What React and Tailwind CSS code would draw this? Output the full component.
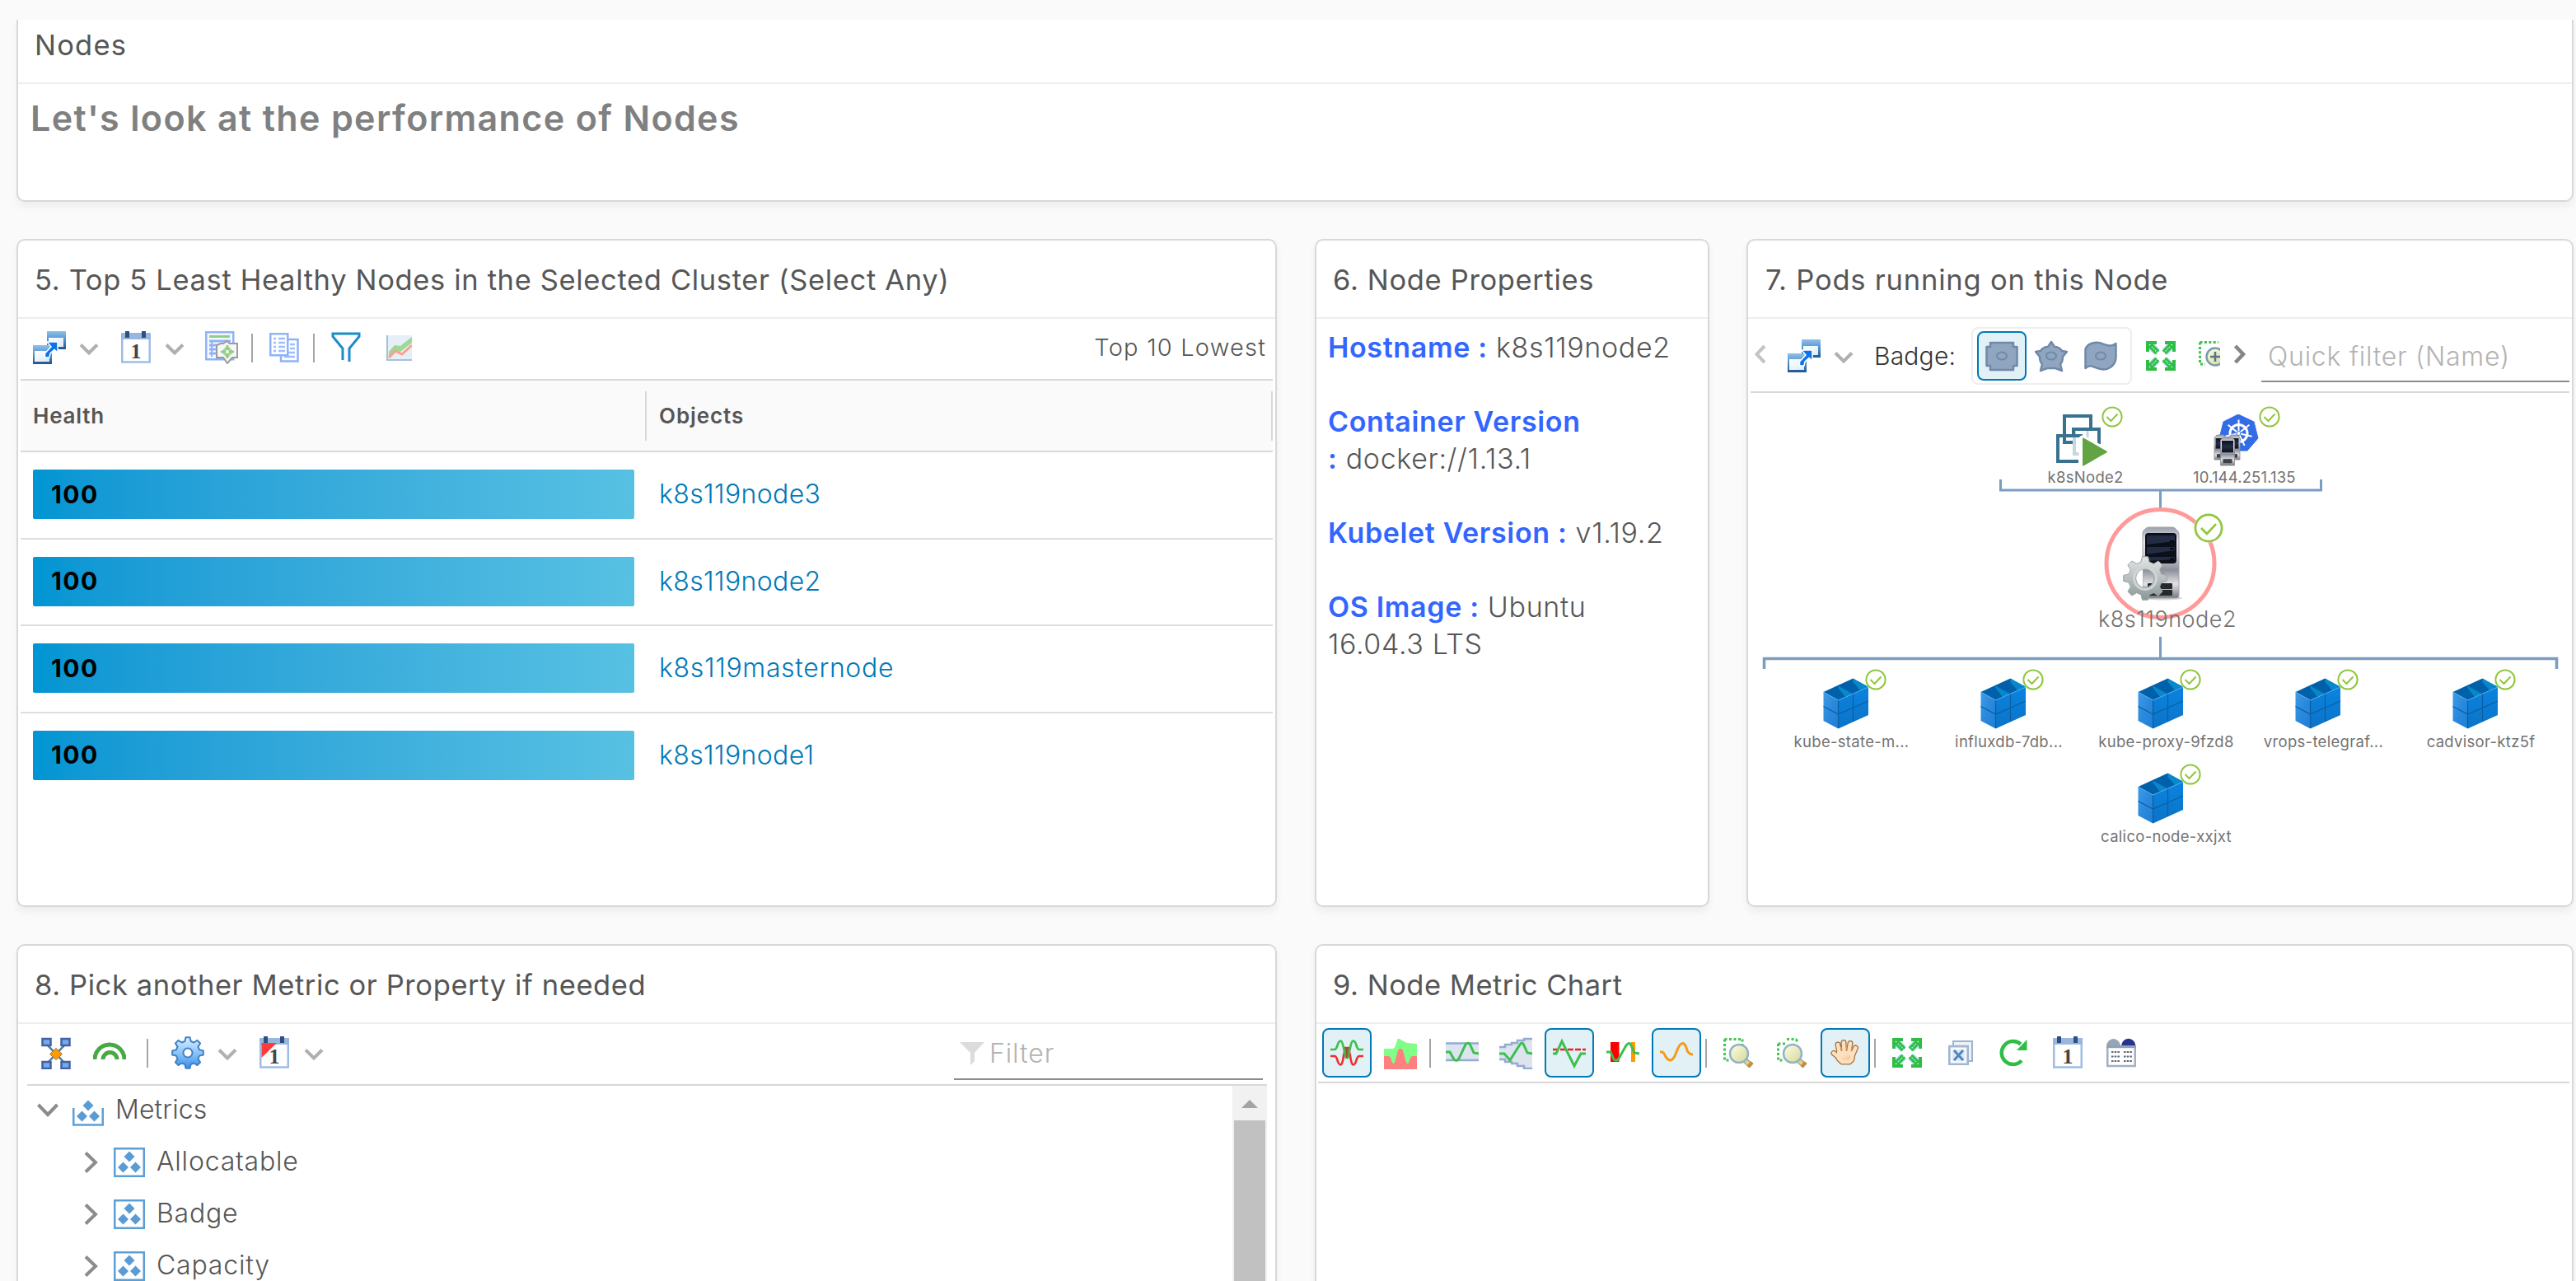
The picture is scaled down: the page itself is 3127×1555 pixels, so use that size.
const gearPath = (cx, cy, ro, ri, n) => {
  const pts = [];
  const step = (Math.PI * 2) / n;
  for (let i = 0; i < n; i++) {
    const a = i * step - Math.PI / 2;
    [[-0.32, ri], [-0.17, ro], [0.17, ro], [0.32, ri]].forEach(([k, r]) => {
      pts.push(`${(cx + r * Math.cos(a + k * step)).toFixed(2)} ${(cy + r * Math.sin(a + k * step)).toFixed(2)}`);
    });
  }
  return `M${pts.join("L")}Z`;
};

const Gradient = ({ id, stops, x2 = 0, y2 = 1 }) => (
  <linearGradient id={id} x1="0" y1="0" x2={x2} y2={y2}>
    {stops.map((c, i) => (
      <stop key={i} offset={i / (stops.length - 1)} stopColor={c} />
    ))}
  </linearGradient>
);

const Gradients = () => (
  <svg className="absolute h-0 w-0" aria-hidden="true">
    <defs>
      <Gradient id="win" stops={["#8fc0ea", "#4f90cb", "#1d5790"]} />
      <Gradient id="pane" stops={["#ffffff", "#dbeafa"]} x2={1} />
      <Gradient id="gearBlue" stops={["#ddeeff", "#8cc4fa", "#3a8eea"]} />
      <Gradient id="gearGray" stops={["#e4e6e6", "#b9bfbf", "#8a9797"]} />
      <Gradient id="metal" stops={["#9a9fab", "#e6e6ea", "#d2d3d9", "#8c8f9a", "#e2e2e6", "#77797f"]} />
      <Gradient id="screen" stops={["#0c111c", "#232f47", "#0c111c"]} />
      <Gradient id="cubeL" stops={["#3f9be6", "#2a89dc", "#1f7fd6"]} x2={1} />
      <Gradient id="cubeR" stops={["#0a84e0", "#0b73c6"]} />
      <Gradient id="skin" stops={["#fff0dd", "#f8b67c"]} x2={1} />
      <Gradient id="lens" stops={["#ffffe4", "#d3d69a"]} x2={1} />
    </defs>
  </svg>
);

const Svg = ({ w = 40, h = 40, className = "", children }) => (
  <svg width={w} height={h} viewBox={`0 0 ${w} ${h}`} fill="none" className={`shrink-0 ${className}`}>
    {children}
  </svg>
);

const LinkIcon = ({ className }) => (
  <Svg className={className}>
    <rect x="17" y="0" width="23" height="22" fill="url(#win)" />
    <rect x="19" y="8" width="18" height="11" fill="url(#pane)" />
    <rect x="0" y="17" width="23" height="23" fill="url(#win)" />
    <rect x="2" y="24" width="18" height="13" fill="url(#pane)" />
    <path d="M17 13H30V26L26 22.500L21 27L20 32H14.500V27L22 19Z" fill="#0b74ea" stroke="#fff" strokeWidth="1.500" />
  </Svg>
);

const ChevronDown = ({ className }) => (
  <Svg w={24} h={16} className={className}>
    <path d="M2 2.500L12 12.500L22 2.500" stroke="#b0b0b0" strokeWidth="4" />
  </Svg>
);

const CalendarIcon = ({ className, flag }) => (
  <Svg w={36} h={40} className={className}>
    <rect x="1.250" y="4" width="33.500" height="33.500" fill="#fff" stroke="#9dbde6" strokeWidth="2.500" />
    <rect x="0" y="2" width="36" height="8" fill="#9ab6dd" />
    <rect x="5" y="0" width="5" height="8" fill="#2c4f86" />
    <rect x="25" y="0" width="5" height="8" fill="#2c4f86" />
    <text x="18" y="33" textAnchor="middle" fill="#454545" className="font-['Liberation_Serif'] text-[26px] font-bold">1</text>
    {flag && <path d="M2.500 8H21L2.500 26Z" fill="#ff3b3b" />}
  </Svg>
);

const ReportIcon = ({ className }) => (
  <Svg className={className}>
    <rect x="1.250" y="1.250" width="33" height="33" fill="#f4f8ff" stroke="#8fb3fb" strokeWidth="2.500" />
    <rect x="5" y="5" width="25" height="3" fill="#8fcf86" />
    <path d="M5 12H31M5 17H14M5 22H14M5 27H14" stroke="#8fb3fb" strokeWidth="3" />
    <path d="M8 12V31" stroke="#8fb3fb" strokeWidth="2" />
    <path d="M19 15H22L26 12L30 15H39V32H33L27 39L22 32H14V17Z" fill="#f7f7f7" stroke="#9b9b9b" strokeWidth="2" />
    <path d="M27 17L34.500 25L27 33L19.500 25Z" fill="#a5d79a" />
    <path d="M27 17V33M19 25H35" stroke="#8ccb7e" strokeWidth="2.500" />
    <circle cx="27" cy="25" r="2" fill="#fff" />
  </Svg>
);

const CopyIcon = ({ className }) => (
  <Svg w={36} h={36} className={className}>
    <rect x="14" y="8" width="20.500" height="26.500" fill="#fff" stroke="#8fb3fb" strokeWidth="2.500" />
    <path d="M25 14H31M25 19H31M18 24H31M18 29H31" stroke="#9fbffc" strokeWidth="2.500" />
    <rect x="1.250" y="1.250" width="21" height="26" fill="#fff" stroke="#8fb3fb" strokeWidth="2.500" />
    <path d="M5 7H8M11 7H19M5 12H8M11 12H19M5 17H8M11 17H19M5 22H8M11 22H19" stroke="#9fbffc" strokeWidth="2.500" />
  </Svg>
);

const FunnelIcon = ({ className }) => (
  <Svg w={36} h={38} className={className}>
    <path d="M14 34V20L2 5.500V2H34V5.500L22 20V36" stroke="#1a8cc6" strokeWidth="3" />
  </Svg>
);

const ChartIcon = ({ className }) => (
  <Svg w={31} h={31} className={className}>
    <rect width="31" height="31" fill="#e6eef7" />
    <path d="M3 20L10 12L17 13L31 2V9L17 20L11 18L3 26Z" fill="#9dd896" />
    <path d="M3 27L11 19L19 23L31 12" stroke="#fba08a" strokeWidth="3" />
    <path d="M1 0V30H31" stroke="#a7c0da" strokeWidth="2" />
  </Svg>
);

const Separator = ({ className = "" }) => <div className={`h-[35px] w-0.5 shrink-0 bg-[#aaa5a2] ${className}`} />;

const ExpandIcon = ({ className }) => (
  <Svg w={36} h={36} className={className}>
    {["", "rotate(90 18 18)", "rotate(180 18 18)", "rotate(270 18 18)"].map((t, i) => (
      <g key={i} transform={t}>
        <path d="M5 5L13.500 13.500" stroke="#9fdcf2" strokeWidth="9" />
        <path d="M5 5L14 14" stroke="#2fbd45" strokeWidth="6.500" />
        <path d="M7 7L14 14" stroke="#c9f2d6" strokeWidth="1.500" strokeDasharray="1.500 1.500" />
        <path d="M2 13V2H13" stroke="#2fbd45" strokeWidth="4" />
      </g>
    ))}
  </Svg>
);

const DottedPlus = ({ className }) => (
  <Svg w={26} h={32} className={className}>
    <path d="M1.500 1.500H24M1.500 1.500V28H8" stroke="#3fc04f" strokeWidth="3" strokeDasharray="3 2.400" />
    <circle cx="20" cy="19" r="10.500" fill="url(#lens)" stroke="#7c9aad" strokeWidth="2.500" />
    <path d="M20 13V25M14 19H26" stroke="#54758c" strokeWidth="2.500" />
  </Svg>
);

const Magnifier = ({ className, split }) => (
  <Svg className={className}>
    {split ? (
      <path d="M12 3.500H24M1.500 9H12M1.500 9V29H9M24 3.500V9" stroke="#3fc84f" strokeWidth="3" strokeDasharray="3 2.500" />
    ) : (
      <path d="M1.500 3.500H23M1.500 3.500V29H9M23 3.500V12" stroke="#3fc84f" strokeWidth="3" strokeDasharray="3 2.500" />
    )}
    <path d="M25 28L34 36" stroke="#8fa9a5" strokeWidth="7" />
    <path d="M26 29L33 35.500" stroke="#e2d28a" strokeWidth="4" />
    <path d="M30 37L35 31.500" stroke="#cf8a2c" strokeWidth="4" />
    <circle cx="19" cy="21" r="11" fill="url(#lens)" stroke="#93b3c4" strokeWidth="2.500" />
  </Svg>
);

const HandIcon = () => (
  <Svg>
    <g strokeLinecap="round" strokeLinejoin="round">
      <g stroke="#a8713f" strokeWidth="7">
        <path d="M13 20L11 10M18.500 18L18 7.500M24.500 18L26 8.500M29 22L32.500 14M13 26L6 20.500" />
        <path d="M12 20H29L28 28L25 31H16L12 27Z" />
      </g>
      <g stroke="#fde0c0" strokeWidth="4.500">
        <path d="M13 20L11 10M18.500 18L18 7.500M24.500 18L26 8.500M29 22L32.500 14M13 26L6 20.500" />
        <path d="M12 20H29L28 28L25 31H16L12 27Z" fill="url(#skin)" />
      </g>
      <path d="M15 17V13M21.500 16V12M27 18L28 14" stroke="#d69a66" strokeWidth="1.200" />
    </g>
  </Svg>
);

const CloseWindows = ({ className }) => (
  <Svg w={30} h={30} className={className}>
    <rect x="6" y="1" width="23" height="24" fill="#edf2f9" stroke="#9fb3cd" strokeWidth="2" />
    <rect x="1.250" y="7" width="22.500" height="22" fill="#dfe9f5" stroke="#a3b6d0" strokeWidth="2.500" />
    <rect x="4" y="10" width="17" height="16" stroke="#fff" strokeWidth="1.500" />
    <path d="M7 12L18 24M18 12L7 24" stroke="#4f87ba" strokeWidth="3" />
  </Svg>
);

const RefreshIcon = ({ className }) => (
  <Svg w={35} h={36} className={className}>
    <path d="M27 27.500A14 14 0 1 1 26 7.500" stroke="#2fbd45" strokeWidth="4.500" />
    <path d="M33.500 2V15H21Z" fill="#2fbd45" />
  </Svg>
);

const TimetableIcon = ({ className }) => (
  <Svg w={36} h={36} className={className}>
    <path d="M0 10A8.500 9 0 0 1 17 10Z" fill="#98a5b5" />
    <path d="M18 10A8.500 9 0 0 1 35.500 10Z" fill="#27338c" />
    <rect x="1.250" y="11" width="33.500" height="23" fill="#fff" stroke="#a2b0c6" strokeWidth="2.500" />
    <path d="M0 10.500H36" stroke="#8fa1b8" strokeWidth="3" />
    <path d="M6 17H16M6 22.500H16M6 28H16M21 17H31M21 22.500H31M21 28H31" stroke="#5d6678" strokeWidth="2.200" strokeDasharray="2.500 1.200" />
  </Svg>
);

const Toggle = ({ className = "", children }) => (
  <div className={`flex h-[60px] w-[60px] shrink-0 items-center justify-center rounded-lg border-2 border-[#0079b8] bg-[#e1f1f6] ${className}`}>{children}</div>
);

const Panel = ({ title, titleClass = "tracking-[0.65px]", className = "", children }) => (
  <section className={`flex flex-col rounded-[10px] border-2 border-[#d8d8d8] bg-white shadow-[0_6px_10px_rgba(0,0,0,0.05)] ${className}`}>
    <h2 className={`h-[95px] shrink-0 border-b-2 border-[#eee] pl-5 text-[34.5px] leading-[95px] whitespace-nowrap text-[#565656] ${titleClass}`}>{title}</h2>
    {children}
  </section>
);

const NODES = ["k8s119node3", "k8s119node2", "k8s119masternode", "k8s119node1"];

const HealthPanel = () => (
  <Panel title="5. Top 5 Least Healthy Nodes in the Selected Cluster (Select Any)" className="w-[1530px]">
    <div className="mx-[3px] flex h-[75px] shrink-0 items-center border-b-2 border-[#d8d8d8] pb-[3px]">
      <LinkIcon className="ml-[15px]" />
      <ChevronDown className="mt-1 ml-4" />
      <CalendarIcon className="ml-[27px]" />
      <ChevronDown className="mt-1 ml-[17px]" />
      <ReportIcon className="ml-[25px]" />
      <Separator className="ml-4" />
      <CopyIcon className="ml-5" />
      <Separator className="ml-[17px]" />
      <FunnelIcon className="ml-[20px]" />
      <ChartIcon className="ml-[31px]" />
      <span className="mr-[8px] ml-auto text-[29px] font-[350] tracking-[1.2px]">Top 10 Lowest</span>
    </div>
    <div className="mx-[3px] flex h-[87px] shrink-0 items-center border-b-2 border-[#d8d8d8] bg-[#fafafa] text-[26px] font-semibold">
      <div className="flex h-[60px] w-[760px] items-center border-r-2 border-[#d8d8d8] pl-[15px] tracking-[0.8px]">Health</div>
      <div className="flex h-[60px] flex-1 items-center border-r-2 border-[#d8d8d8] pl-[15px] tracking-[0.9px]">Objects</div>
    </div>
    {NODES.map((n, i) => (
      <div key={n} className={`mx-[3px] flex h-[105.5px] shrink-0 items-center ${i < 3 ? "border-b-2 border-[#dedede]" : "pb-0.5"}`}>
        <div className="-mt-px ml-[15px] flex h-[60px] w-[730px] items-center rounded-[2px] bg-linear-to-r from-[#0095d3] to-[#57c1e3] pl-[22px] text-[30px] font-bold tracking-[1.4px] text-black">100</div>
        <span className={`-mt-px ml-[30px] text-[32px] font-[350] text-[#0079b8] ${n.length > 12 ? "tracking-[0.65px]" : "tracking-[0.35px]"}`}>{n}</span>
      </div>
    ))}
  </Panel>
);

const Prop = ({ name, children }) => (
  <p>
    <b className="font-semibold tracking-[0.65px] text-[#36f]">{name}</b> {children}
  </p>
);

const PropertiesPanel = () => (
  <Panel title="6. Node Properties" className="ml-[46px] w-[479px]">
    <div className="flex flex-col gap-[45px] pt-[12px] pl-[14px] text-[34px] leading-[45px] font-[350] tracking-[0.65px]">
      <Prop name="Hostname :">k8s119node2</Prop>
      <Prop name={<>Container Version<br />:</>}>docker://1.13.1</Prop>
      <Prop name="Kubelet Version :">v1.19.2</Prop>
      <Prop name="OS Image :">Ubuntu<br />16.04.3 LTS</Prop>
    </div>
  </Panel>
);

const Badge = ({ size }) => (
  <svg width={size} height={size} viewBox="0 0 26 26" fill="none">
    <circle cx="13" cy="13" r="12.800" fill="#fff" />
    <circle cx="13" cy="13" r="11.600" stroke="#91c63f" strokeWidth="2" />
    <path d="M6.500 13L11.500 18L19.500 9.500" stroke="#91c63f" strokeWidth="2" />
  </svg>
);

const VmGlyph = () => (
  <Svg w={64} h={64}>
    <rect x="10" y="2" width="32" height="32" fill="#fff" stroke="#38728f" strokeWidth="4" />
    <rect x="22" y="18" width="30" height="30" fill="#fff" stroke="#c5d7df" strokeWidth="4" />
    <path d="M21 24V18H52V36" stroke="#38728f" strokeWidth="4" />
    <path d="M38 20V34" stroke="#c5d7df" strokeWidth="3" />
    <path d="M27 57H2V26H32" stroke="#38728f" strokeWidth="4" />
    <path d="M32 30L62 46L32 62Z" stroke="#fff" strokeWidth="9" strokeLinejoin="round" fill="#fff" />
    <path d="M33 29.500L61 45.500L33 61.500Z" fill="#62a443" stroke="#62a443" strokeWidth="2" strokeLinejoin="round" />
  </Svg>
);

const MiniServer = ({ x, y, w, h }) => (
  <g>
    <path d={`M${x} ${y + 3}L${x + 3} ${y}H${x + w - 3}L${x + w} ${y + 3}V${y + h}H${x}Z`} fill="url(#metal)" stroke="#8b8d95" strokeWidth="0.800" />
    <rect x={x + 1.500} y={y + 4} width={w - 3} height={h * 0.42} fill="url(#screen)" />
    <rect x={x + 3} y={y + h * 0.77} width={w - 6} height={h * 0.15} fill="#3f4146" />
  </g>
);

const KubernetesGlyph = () => (
  <Svg w={56} h={64}>
    <path d="M30 0L49 9L54 29L41 44H19L7 29L12 9Z" fill="#326de6" stroke="#326de6" strokeWidth="1" strokeLinejoin="round" />
    <circle cx="30.500" cy="23" r="10.500" stroke="#fff" strokeWidth="3" />
    {[0, 1, 2, 3, 4, 5, 6].map((i) => (
      <path key={i} d="M30.500 23V6.500" stroke="#fff" strokeWidth="2" transform={`rotate(${(i * 360) / 7} 30.500 23)`} />
    ))}
    <circle cx="30.500" cy="23" r="2.500" fill="#fff" stroke="#326de6" />
    <MiniServer x={1} y={25} w={14} h={30} />
    <MiniServer x={18} y={25} w={14} h={30} />
    <MiniServer x={8.500} y={28} w={17} h={34} />
  </Svg>
);

const ServerGlyph = () => (
  <Svg w={74} h={92}>
    <ellipse cx="48" cy="87" rx="24" ry="2.500" fill="#b9b9b9" opacity="0.600" />
    <path d="M24 8Q24 6 26 4L29 1.500Q30 1 32 1H60Q62 1 63 2L67 6Q68 8 68 10V84Q68 87 65 87H27Q24 87 24 84Z" fill="url(#metal)" stroke="#a0a2aa" />
    <rect x="27" y="8" width="38" height="37" rx="4" fill="#0b0f19" />
    <path d="M29 11H63V18L29 22ZM29 25H63V29L29 34ZM29 37H63V40L29 42Z" fill="#222d43" />
    <path d="M57 18H62M57 27H62M57 39.500H62" stroke="#05070c" strokeWidth="2" />
    <circle cx="46" cy="54" r="4" stroke="#8f9198" strokeWidth="1.500" />
    <rect x="30" y="69" width="30" height="7" rx="1" fill="#26282c" />
    <rect x="30" y="77" width="30" height="7" rx="1" fill="#26282c" />
    <path fillRule="evenodd" d={`${gearPath(27, 63, 26.500, 20.500, 8)}M38 63A11 11 0 1 0 16 63A11 11 0 1 0 38 63Z`} fill="url(#gearGray)" stroke="#9aa3a3" strokeWidth="1" strokeLinejoin="round" />
    <circle cx="27" cy="63" r="13.500" stroke="#cfd4d4" strokeWidth="3" />
    <path d="M24 52.500A11 11 0 0 0 24 73.500Z" fill="#fff" />
  </Svg>
);

const PodGlyph = () => (
  <Svg w={56} h={62}>
    <path d="M0.500 17L36.500 0.500L55 11L18.500 27Z" fill="#0060aa" />
    <path d="M18.500 9L37 18.500L27 23L18.500 12ZM36.500 1L55 10.500L45 15L36.500 5Z" fill="#0689cc" />
    <path d="M0.500 17L18.500 27V61.500L0.500 52Z" fill="url(#cubeL)" />
    <path d="M18.500 27L55 11V45L18.500 61.500Z" fill="url(#cubeR)" />
    <path d="M0.500 34.500L18.500 44L55 28M18.500 27V61M36.500 19V53M18.500 9L36.500 19" stroke="#0a5ea3" strokeWidth="1.200" />
    <path d="M0.500 17L18.500 27L55 11" stroke="#5fb0ef" strokeWidth="0.800" />
  </Svg>
);

const PODS = [
  { x: 89, y: 346, label: "kube-state-m..." },
  { x: 280, y: 346, label: "influxdb-7db..." },
  { x: 471, y: 346, label: "kube-proxy-9fzd8" },
  { x: 662, y: 346, label: "vrops-telegraf..." },
  { x: 853, y: 346, label: "cadvisor-ktz5f" },
  { x: 471, y: 461, label: "calico-node-xxjxt" },
];

const Topology = () => (
  <div className="relative mx-[3px] flex-1 text-[18.500px] font-normal tracking-[0.300px] whitespace-nowrap text-[#737373]">
    <svg width="994" height="360" fill="none" className="absolute top-0 left-0">
      <path d="M303.500 105V118H692.500V105M497.500 118V140M497.500 296V322" stroke="#7a9dc0" strokeWidth="3" />
      <path d="M16.500 335V322.500H978.500V335" stroke="#7a9dc0" strokeWidth="3.500" />
      <circle cx="497.500" cy="207" r="65.500" stroke="#ff9a9a" strokeWidth="5" />
    </svg>
    <div className="absolute top-[26px] left-[371px]"><VmGlyph /></div>
    <div className="absolute top-[15.500px] left-[425.500px]"><Badge size={26} /></div>
    <span className="absolute top-[90px] left-[360.500px] leading-[24px] tracking-[0.300px]">k8sNode2</span>
    <div className="absolute top-[26px] left-[562px]"><KubernetesGlyph /></div>
    <div className="absolute top-[15.500px] left-[616.500px]"><Badge size={26} /></div>
    <span className="absolute top-[90px] left-[537px] leading-[24px] tracking-[0.150px]">10.144.251.135</span>
    <div className="absolute top-[162px] left-[452px]"><ServerGlyph /></div>
    <div className="absolute top-[146px] left-[538px]"><Badge size={36} /></div>
    <span className="absolute top-[255px] left-[422px] text-[27px] leading-[40px] font-[350] tracking-[0.500px]">k8s119node2</span>
    {PODS.map((p) => (
      <div key={p.label} className="absolute h-[62px] w-14" style={{ left: p.x - 1, top: p.y }}>
        <PodGlyph />
        <div className="absolute -top-[11px] left-[51px]"><Badge size={26} /></div>
        <span className="absolute top-[64.500px] left-[34.500px] -translate-x-1/2 leading-[24px]">{p.label}</span>
      </div>
    ))}
  </div>
);

const BadgeShape = ({ d, className = "" }) => (
  <Svg className={className}>
    <path d={d} fill="#90a5bf" stroke="#7089a9" strokeWidth="2.500" strokeLinejoin="round" />
    <ellipse cx="20" cy="20" rx="6" ry="4.500" stroke="#7089a9" strokeWidth="2" />
  </Svg>
);

const PodsPanel = () => (
  <Panel title="7. Pods running on this Node" titleClass="pl-[21px] tracking-[0.8px]" className="ml-[45px] w-[1004px]">
    <div className="mx-[3px] flex h-[90px] shrink-0 items-center border-b-2 border-[#d8d8d8] pt-[2px]">
      <Svg w={14} h={24} className="-mt-1 ml-[5px]"><path d="M12 2L2.500 12L12 22" stroke="#c4c4c4" strokeWidth="4" /></Svg>
      <LinkIcon className="ml-[26px]" />
      <ChevronDown className="mt-1 ml-4" />
      <span className="ml-[25px] w-[98px] text-[30px] font-[350] tracking-[0.2px] text-[#333]">Badge:</span>
      <div className="ml-[20px] flex h-[70px] w-[195px] shrink-0 items-center rounded-lg border-2 border-[#eee] pl-[5px]">
        <Toggle><BadgeShape d="M6 4H34V9H38.500V32H34V37H6V32H1.500V9H6Z" /></Toggle>
        <BadgeShape className="ml-[10px]" d="M20 3L24 9C28 9 31 11 33 14L39 15L34 21C34 25 33 28 31 30L33 38L25 35H15L7 38L9 30C7 28 6 25 6 21L1 15L7 14C9 11 12 9 16 9Z" />
        <BadgeShape className="ml-5" d="M1.500 12C4 5 12 3 18 4C24 5 31 11 38.500 5V22C38 32 29 38 20 36C12 35 8 29 1.500 35Z" />
      </div>
      <ExpandIcon className="ml-[17px]" />
      <DottedPlus className="-mt-1 ml-[28px]" />
      <Svg w={16} h={24} className="-mt-1 ml-4"><path d="M2.500 2L12 12L2.500 22" stroke="#858585" strokeWidth="4.500" /></Svg>
      <div className="ml-[18px] h-[64px] w-[374px] border-b-2 border-[#8c8c8c] pl-[8px] text-[32px] leading-[65px] font-[350] tracking-[0.75px] whitespace-nowrap text-[#b3b3b3]">Quick filter (Name)</div>
    </div>
    <Topology />
  </Panel>
);

const diamonds = [[19, 7], [11.500, 20], [26.500, 20]];
const MetricGlyph = ({ open }) => (
  <Svg w={38} h={36}>
    {open ? <path d="M1.250 14V34.500H36.750V14" stroke="#5c9fd6" strokeWidth="2.500" /> : <rect x="1.250" y="1.250" width="35.500" height="33.500" stroke="#5c9fd6" strokeWidth="2.500" />}
    {diamonds.map(([x, y]) => (
      <path key={x} d={`M${x} ${y - 2.500}L${x + 6.500} ${y + 4}L${x} ${y + 10.500}L${x - 6.500} ${y + 4}Z`} fill="#5b9bd5" />
    ))}
  </Svg>
);

const MetricPicker = () => (
  <Panel title="8. Pick another Metric or Property if needed" titleClass="tracking-[0.6px]" className="w-[1530px]">
    <div className="mr-[10px] ml-[11px] flex h-[75px] shrink-0 items-center border-b-2 border-[#d8d8d8] pb-[3px]">
      <Svg w={36} h={40} className="ml-[17px]">
        <path d="M5 8L31 35M31 8L5 35" stroke="#55779f" strokeWidth="2.500" />
        {[[1.500, 3], [24.500, 3], [1.500, 31], [24.500, 31]].map(([x, y]) => (
          <rect key={`${x}-${y}`} x={x} y={y} width="10" height="8" fill="#7aa7f2" stroke="#41639f" strokeWidth="2.500" />
        ))}
        <path d="M18 14.500L25.500 21.500L18 28.500L10.500 21.500Z" fill="#ff9a00" stroke="#8d7a55" />
      </Svg>
      <Svg className="ml-[27px]">
        <path d="M2 28A18 18 0 0 1 38 28" stroke="#46a942" strokeWidth="5" />
        <path d="M12 28A8.500 8.500 0 0 1 29 28" stroke="#46a942" strokeWidth="5" />
      </Svg>
      <Separator className="ml-[25px]" />
      <Svg className="ml-7">
        <path fillRule="evenodd" d={`${gearPath(20, 20, 19, 14.500, 8)}M25.500 20A5.500 5.500 0 1 0 14.500 20A5.500 5.500 0 1 0 25.500 20Z`} fill="url(#gearBlue)" stroke="#3f82c4" strokeWidth="2" strokeLinejoin="round" />
      </Svg>
      <ChevronDown className="mt-1 ml-4" />
      <CalendarIcon className="ml-[27px]" flag />
      <ChevronDown className="mt-1 ml-[18px]" />
      <div className="mt-[3px] mr-[5px] ml-auto flex h-[65px] w-[375px] items-center self-start border-b-2 border-[#8c8c8c] pt-0.5 pl-[7px] text-[32px] font-[350] text-[#b3b3b3]">
        <Svg w={30} h={30}><path d="M0 1H30L18 14V24L13 29V14Z" fill="#dcdcdc" /></Svg>
        <span className="ml-[6px] tracking-[0.9px]">Filter</span>
      </div>
    </div>
    <div className="mr-[10px] ml-[11px] flex flex-1 text-[32px] font-[350]">
      <ul className="-mt-[3px] flex-1">
        <li className="flex h-[63px] items-center">
          <Svg w={26} h={17} className="mt-[2px] ml-3"><path d="M1.500 2L13 14L24.500 2" stroke="#8c8c8c" strokeWidth="4" /></Svg>
          <div className="mt-[4px] mr-[14px] ml-[17px]"><MetricGlyph open /></div>
          <span className="tracking-[0.100px]">Metrics</span>
        </li>
        {["Allocatable", "Badge", "Capacity"].map((m) => (
          <li key={m} className="flex h-[63px] items-center">
            <Svg w={17} h={26} className="mt-[3px] ml-[69px]"><path d="M2 1.500L14 13L2 24.500" stroke="#8c8c8c" strokeWidth="4" /></Svg>
            <div className="mt-[3px] mr-[14px] ml-[19px]"><MetricGlyph /></div>
            <span className="tracking-[0.800px]">{m}</span>
          </li>
        ))}
      </ul>
      <div className="flex w-[42px] flex-col items-center bg-[#f1f1f1]">
        <Svg w={20} h={10} className="mt-[17px] mb-[15px]"><path d="M10 0L20 10H0Z" fill="#a3a3a3" /></Svg>
        <div className="w-[38px] flex-1 bg-[#c1c1c1]" />
      </div>
    </div>
  </Panel>
);

const G = "#3cc04f";

const MetricChart = () => (
  <Panel title="9. Node Metric Chart" titleClass="tracking-[0.5px]" className="ml-[46px] w-[1528px]">
    <div className="mr-[3px] ml-[2px] flex h-[72px] shrink-0 items-center border-b-2 border-[#d8d8d8]">
      <Toggle className="ml-[5px]">
        <Svg>
          <path d="M0 24H5Q7 24 8.500 29Q10 34.500 12.500 34.500Q14.500 34 16 24L18 14H22L24 24Q25.500 34 27.500 34.500Q30 34.500 31.500 29Q33 24 35 24H40" stroke="#ee3030" strokeWidth="2.700" />
          <path d="M0 16H5Q7 16 8.500 11Q10 5.500 12.500 5.500Q14.500 6 16 14L19 26H21L24 14Q25.500 6 27.500 5.500Q30 5.500 31.500 11Q33 16 35 16H40" stroke={G} strokeWidth="2.700" />
          <path d="M18 13H22L21 26H19Z" fill="#a8502f" />
        </Svg>
      </Toggle>
      <Svg className="ml-[15px]">
        <path d="M0 15H10Q13 15 14 11L16.500 3Q18 2 22 5L28 8L40 9V40H0Z" fill="#80ff88" />
        <path d="M0 24H5Q8 24 9 29Q10 33 11.500 33Q13 33 14 28L17 17Q18 15 20 15Q22 15 23 17L26 28Q27 33 29 33Q30 33 31 29Q32 24 35 24H40V40H0Z" fill="#ff8080" />
      </Svg>
      <Separator className="ml-[15px]" />
      <Svg className="ml-[18px]">
        <rect y="8" width="40" height="22" fill="#dde4ef" />
        <path d="M0 8.500H40M0 29H40" stroke="#93acd0" strokeWidth="2.500" />
        <path d="M0 19H5L10 28Q13 31 16 27L24 10Q28 6 30 11L34 20L40 21" stroke={G} strokeWidth="3" />
      </Svg>
      <Svg className="ml-[25px]">
        <path d="M0 13H7V10H15V8H22V5H30V3H40V39H30V36H22V33H15V31H7V28H0Z" fill="#dde4ef" />
        <path d="M0 13H7V10H15V8H22V5H30V3H40M0 28H7V31H15V33H22V36H30V39H40" stroke="#93acd0" strokeWidth="2.500" />
        <path d="M0 21H6L13 29L25 10Q28 6 30 11L34 20L40 21" stroke={G} strokeWidth="3" />
      </Svg>
      <Toggle className="ml-[15px]">
        <Svg>
          <path d="M0 16H40" stroke="#ee2222" strokeWidth="2.500" strokeDasharray="7 2" />
          <path d="M0 21H4L11 6L26 36L34 21H40" stroke={G} strokeWidth="3" />
        </Svg>
      </Toggle>
      <Svg className="ml-[15px]">
        <rect x="5" y="7" width="10.500" height="24" fill="#f00" />
        <rect x="30" y="7" width="5" height="24" fill="#ff9a00" />
        <path d="M0 19H5L9 28Q12 31 15 27L24 11Q28 6 30 11L34 20L40 21" stroke={G} strokeWidth="3" />
      </Svg>
      <Toggle className="ml-[15px]">
        <Svg><path d="M0 19H3Q5 20 7 25Q10 29 13 29Q17 28 20 19Q24 8 28 8.500Q31 9 33 17Q35 22 40 22" stroke="#f79a1a" strokeWidth="3" /></Svg>
      </Toggle>
      <Separator className="ml-[5px]" />
      <Magnifier className="ml-[20px]" />
      <Magnifier className="ml-[25px]" split />
      <Toggle className="ml-[13px]"><HandIcon /></Toggle>
      <Separator className="ml-[5px]" />
      <ExpandIcon className="ml-5" />
      <CloseWindows className="ml-8" />
      <RefreshIcon className="ml-8" />
      <CalendarIcon className="ml-[30px]" />
      <TimetableIcon className="ml-[29px]" />
    </div>
  </Panel>
);

export default function App() {
  return (
    <main className="h-[1555px] w-[3127px] overflow-hidden bg-[#fafafa] pt-6 pl-5 font-['Inter','Liberation_Sans',sans-serif] text-[#565656]">
      <Gradients />
      <section className="h-[221px] w-[3104px] rounded-b-[10px] border-2 border-t-0 border-[#d8d8d8] bg-white shadow-[0_6px_10px_rgba(0,0,0,0.05)]">
        <h2 className="h-[78px] border-b-2 border-[#eee] pl-5 text-[34.500px] leading-[62px] tracking-[1.200px]">Nodes</h2>
        <p className="pl-[15px] text-[43px] leading-[83px] font-semibold tracking-[1.350px] text-[#808080]">Let's look at the performance of Nodes</p>
      </section>
      <div className="mt-[45px] flex h-[811px]">
        <HealthPanel />
        <PropertiesPanel />
        <PodsPanel />
      </div>
      <div className="mt-[45px] flex h-[600px]">
        <MetricPicker />
        <MetricChart />
      </div>
    </main>
  );
}
